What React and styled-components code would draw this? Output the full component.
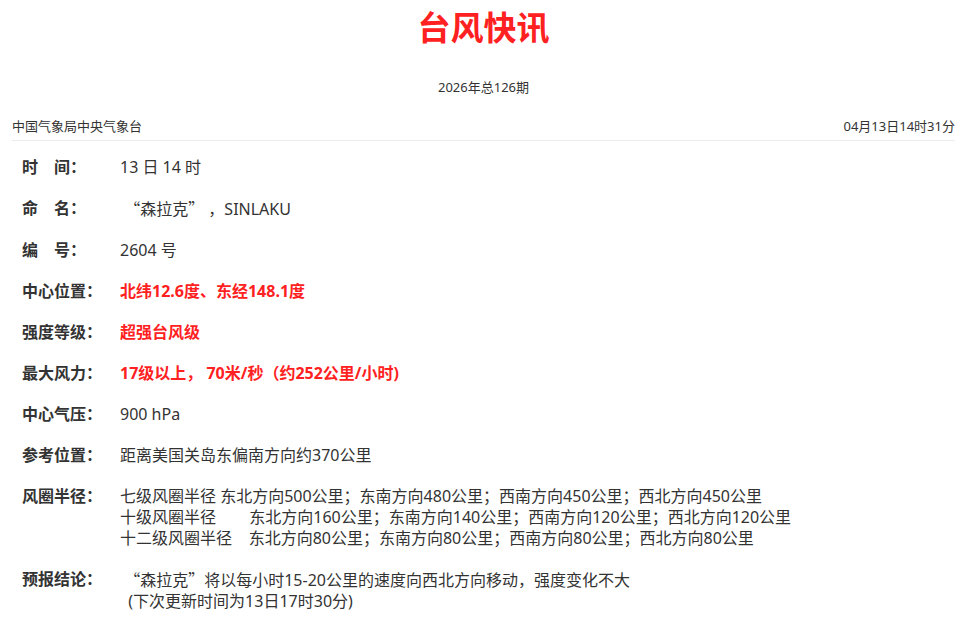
import React from 'react'
import styled, { createGlobalStyle } from 'styled-components'

const GlobalStyle = createGlobalStyle`
  body {
    margin: 0;
    background: #fff;
    font-family: "Noto Sans", "Noto Sans CJK SC", sans-serif;
    color: #333;
  }
`

const Page = styled.div`
  padding: 0 10px 0 12px;
`

const Title = styled.h1`
  margin: 0;
  padding-top: 7px;
  text-align: center;
  font-size: 33px;
  line-height: 42px;
  font-weight: 700;
  color: #ff2121;
`

const Issue = styled.div`
  margin-top: 28px;
  text-align: center;
  font-size: 13px;
  line-height: 20px;
`

const Meta = styled.div`
  display: flex;
  justify-content: space-between;
  margin-top: 19px;
  padding-bottom: 4px;
  border-bottom: 1px solid #ececec;
  font-size: 13px;
  line-height: 20px;
`

const List = styled.div`
  padding: 16px 0 0 10px;
  display: flex;
  flex-direction: column;
  gap: 20px;
`

const Row = styled.div`
  display: flex;
  font-size: 16px;
  line-height: 21px;
`

const Label = styled.div`
  width: 98px;
  flex: none;
  font-weight: 700;
  white-space: pre;
`

const Value = styled.div`
  white-space: pre;
  color: ${(p) => (p.$hot ? '#ff2121' : '#333')};
  font-weight: ${(p) => (p.$hot ? 700 : 400)};
`

// full-width CJK quote marks around the storm name
const Quote = styled.span`
  font-family: "Noto Sans CJK SC", sans-serif;
`

const Name = () => <Quote>“森拉克”</Quote>

const rows = [
  { label: '时　间：', value: '13 日 14 时' },
  { label: '命　名：', value: <>{' '}<Name />{' ，SINLAKU'}</> },
  { label: '编　号：', value: '2604 号' },
  { label: '中心位置：', value: '北纬12.6度、东经148.1度', hot: true },
  { label: '强度等级：', value: '超强台风级', hot: true },
  { label: '最大风力：', value: '17级以上， 70米/秒（约252公里/小时)', hot: true },
  { label: '中心气压：', value: '900 hPa' },
  { label: '参考位置：', value: '距离美国关岛东偏南方向约370公里' },
  {
    label: '风圈半径：',
    value:
      '七级风圈半径 东北方向500公里；东南方向480公里；西南方向450公里；西北方向450公里\n' +
      '十级风圈半径        东北方向160公里；东南方向140公里；西南方向120公里；西北方向120公里\n' +
      '十二级风圈半径    东北方向80公里；东南方向80公里；西南方向80公里；西北方向80公里',
  },
  {
    label: '预报结论：',
    value: (
      <>
        {' '}
        <Name />
        {'将以每小时15-20公里的速度向西北方向移动，强度变化不大\n  (下次更新时间为13日17时30分)'}
      </>
    ),
  },
]

export default function App() {
  return (
    <Page>
      <GlobalStyle />
      <Title>台风快讯</Title>
      <Issue>2026年总126期</Issue>
      <Meta>
        <span>中国气象局中央气象台</span>
        <span>04月13日14时31分</span>
      </Meta>
      <List>
        {rows.map((r) => (
          <Row key={r.label}>
            <Label>{r.label}</Label>
            <Value $hot={r.hot}>{r.value}</Value>
          </Row>
        ))}
      </List>
    </Page>
  )
}
